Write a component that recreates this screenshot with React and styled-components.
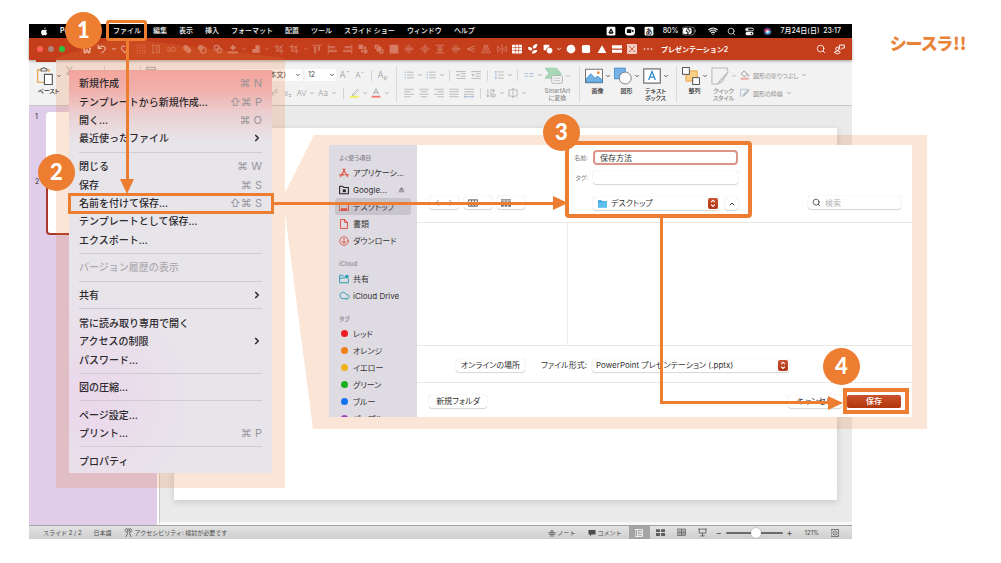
import React from "react";
import styled, { createGlobalStyle, css } from "styled-components";
import { ChevronDown, ChevronLeft, ChevronRight, ChevronUp, Cloud, Search, Wifi } from "lucide-react";

const ORANGE = "#ed7d31";
const HALO = "rgba(237, 125, 49, 0.2)";

const GlobalStyle = createGlobalStyle`
  * {
    box-sizing: border-box;
  }
  body {
    margin: 0;
    background: #ffffff;
    font-family: Inter, "Noto Sans CJK JP", sans-serif;
    color: #333333;
  }
  button,
  input,
  select {
    font: inherit;
    color: inherit;
    margin: 0;
    padding: 0;
    border: none;
    background: none;
    white-space: nowrap;
    font-feature-settings: inherit;
  }
  svg {
    display: block;
    flex: none;
  }
`;

const Page = styled.main`
  position: relative;
  display: flex;
  align-items: flex-start;
  padding: 24px 0;
`;

const Brand = styled.h1`
  flex: none;
  width: 149px;
  margin: 0;
  padding: 6px 0 0 38px;
  font-family: "Noto Sans CJK JP", sans-serif;
  font-feature-settings: "palt";
  font-size: 17px;
  line-height: 26px;
  font-weight: 900;
  color: #e8833a;
  white-space: nowrap;
`;

/* ---------- application window ---------- */

const AppWindow = styled.section`
  flex: 1;
  min-width: 0;
  margin-left: 29px;
`;

const MenuBar = styled.nav`
  display: flex;
  align-items: center;
  gap: 12px;
  height: 14px;
  padding: 0 11px;
  background: #000000;
  color: #f4f4f4;
  font-size: 7px;
  line-height: 14px;
  font-weight: 500;
  white-space: nowrap;
`;

const MenuBarItem = styled.button`
  font-weight: ${(props) => (props.$strong ? 700 : 500)};
  width: ${(props) => (props.$strong ? "41px" : "auto")};
  text-align: left;
  line-height: 14px;
`;

const AppleMark = styled.span`
  width: 8px;
`;

const MenuExtras = styled.div`
  display: flex;
  align-items: center;
  gap: 9px;
  margin-left: auto;
`;

const BatteryState = styled.span`
  display: flex;
  align-items: center;
  gap: 3px;
  margin-right: 3px;
`;

const TitleBar = styled.header`
  position: relative;
  z-index: 1;
  display: flex;
  align-items: center;
  height: 22px;
  padding: 0 7px 0 8px;
  background: #c43e1c;
  color: #ffffff;
  box-shadow: 0 1px 3px rgba(0, 0, 0, 0.35);
  &::after {
    content: "";
    position: absolute;
    left: 7px;
    top: 100%;
    width: 20px;
    height: 2px;
    background: #b5361a;
  }
`;

const Lights = styled.div`
  display: flex;
  gap: 5px;
  width: 43px;
`;

const Light = styled.span`
  width: 6px;
  height: 6px;
  border-radius: 50%;
  background: ${(props) => props.$color};
`;

const QuickAccess = styled.div`
  display: flex;
  align-items: center;
  justify-content: space-between;
  flex: 0 1 575px;
  min-width: 0;
`;

const QuickButton = styled.button`
  display: flex;
  justify-content: center;
  width: ${(props) => (props.$narrow ? 6 : 14)}px;
  opacity: ${(props) => (props.$dim ? 0.32 : 1)};
`;

const DocumentTitle = styled.h2`
  margin: 0 auto 0 6px;
  font-size: 7px;
  font-weight: 600;
  white-space: nowrap;
`;

const TitleActions = styled.div`
  display: flex;
  gap: 8px;
`;

const Ribbon = styled.div`
  display: flex;
  height: 46px;
  padding-top: 6px;
  background: #f3f2f2;
  border-bottom: 1px solid #c6c6c6;
  color: #9b9b9b;
  overflow: hidden;
`;

const Cluster = styled.div`
  flex: none;
  width: ${(props) => (props.$width ? props.$width + "px" : "auto")};
  padding: ${(props) => props.$pad || "0"};
  border-left: ${(props) => (props.$divided ? "1px solid #dcdcdc" : "none")};
  height: 36px;
  display: ${(props) => (props.$inline ? "flex" : "block")};
`;

const ToolRow = styled.div`
  display: flex;
  align-items: center;
  justify-content: ${(props) => (props.$end ? "flex-end" : "flex-start")};
  height: 18px;
`;

const Slot = styled.button`
  display: flex;
  justify-content: center;
  align-items: center;
  flex: none;
  width: ${(props) => props.$w}px;
  height: 16px;
`;

const Rule = styled.span`
  flex: none;
  display: flex;
  justify-content: center;
  width: ${(props) => props.$w}px;
  &::after {
    content: "";
    width: 1px;
    height: 11px;
    background: #d4d4d4;
  }
`;

const BigTool = styled.button`
  display: grid;
  grid-template-columns: 21px 8px;
  align-items: center;
  align-content: start;
  justify-content: center;
  justify-items: center;
  width: 29px;
  padding-top: 1px;
  color: ${(props) => (props.$dim ? "#a9a9a9" : "#333333")};
  font-size: 6px;
  line-height: 7px;
`;

const BigLabel = styled.span`
  grid-column: 1 / -1;
  justify-self: center;
  margin-top: 2px;
  color: ${(props) => (props.$dim ? "#8d8d8d" : "#2f2f2f")};
  font-weight: 500;
  font-feature-settings: "palt";
  white-space: pre;
  text-align: center;
`;

const ShapeTool = styled.button`
  display: flex;
  align-items: center;
  gap: 3px;
  height: 18px;
  color: #8f8f8f;
  font-size: 6px;
  font-feature-settings: "palt";
`;

const RibbonSelect = styled.span`
  position: relative;
  flex: none;
  width: ${(props) => props.$w}px;
  margin-right: ${(props) => props.$gap}px;
  select {
    appearance: none;
    display: block;
    width: 100%;
    height: 12px;
    padding: 0 3px;
    background: #ffffff;
    color: #444444;
    font-size: 7px;
    line-height: 12px;
    text-align: ${(props) => props.$align || "left"};
    padding-right: ${(props) => (props.$align ? 16 : 3)}px;
  }
  svg {
    position: absolute;
    top: 3px;
    right: 1px;
    color: #333333;
  }
`;

const Workspace = styled.div`
  display: flex;
`;

const Thumbnails = styled.aside`
  flex: none;
  width: 128px;
  padding: 6px 6px 0 6px;
  background: #dfcdea;
`;

const ThumbRow = styled.div`
  display: grid;
  grid-template-columns: 11px 1fr;
  align-items: start;
  margin-bottom: 7px;
  font-size: 7px;
  line-height: 9px;
`;

const Thumb = styled.button`
  height: 58px;
  background: #ffffff;
  border-radius: 4px;
  border: 2px solid ${(props) => (props.$active ? "#a8382a" : "#ffffff")};
`;

const Canvas = styled.div`
  flex: 1;
  min-width: 0;
  padding: 22px 15px 22px 14px;
  margin-left: 2px;
  border-left: 1px solid #cccccc;
  border-bottom: 3px solid #f8f8f8;
  background: #eaeaea;
`;

const Slide = styled.article`
  min-height: 372px;
  background: #ffffff;
  box-shadow: 0 2px 7px rgba(0, 0, 0, 0.14);
`;

const StatusBar = styled.footer`
  display: flex;
  align-items: center;
  gap: 12px;
  height: 14px;
  padding: 0 13px 0 14px;
  border-top: 1px solid #a3a3a3;
  background: linear-gradient(#e2e2e2, #cfcfcf);
  color: #4b4b4b;
  font-size: 6px;
  line-height: 13px;
  white-space: nowrap;
`;

const StatusButton = styled.button`
  display: flex;
  align-items: center;
  gap: 2px;
  line-height: 13px;
`;

const StatusTools = styled.div`
  display: flex;
  align-items: center;
  gap: 12px;
  height: 13px;
  margin-left: auto;
`;

const ViewSwitch = styled.div`
  display: flex;
  height: 13px;
  margin: 0 -9px 0 -5px;
`;

const ViewButton = styled.button`
  display: flex;
  justify-content: center;
  align-items: center;
  width: 21px;
  color: ${(props) => (props.$active ? "#ffffff" : "#5d5d5d")};
  background: ${(props) => (props.$active ? "#a4a4a4" : "none")};
`;

const Zoom = styled.div`
  display: flex;
  align-items: center;
  gap: 4px;
  font-size: 9px;
`;

const ZoomRange = styled.input`
  appearance: none;
  width: 57px;
  height: 10px;
  &::-webkit-slider-runnable-track {
    height: 2px;
    background: #6a6a6a;
    border-radius: 1px;
  }
  &::-webkit-slider-thumb {
    appearance: none;
    width: 10px;
    height: 10px;
    margin-top: -4px;
    border-radius: 50%;
    background: #ffffff;
    box-shadow: 0 0 2px rgba(0, 0, 0, 0.3);
  }
`;

/* ---------- annotations ---------- */

const Badge = styled.span`
  position: absolute;
  z-index: 5;
  left: ${(props) => props.$x}px;
  right: ${(props) => props.$right}px;
  top: ${(props) => props.$y}px;
  width: 37px;
  height: 37px;
  border-radius: 50%;
  background: ${ORANGE};
  color: #ffffff;
  font-family: Lato, sans-serif;
  font-size: 22px;
  line-height: 36px;
  font-weight: 900;
  text-align: center;
`;

const frame = css`
  content: "";
  position: absolute;
  z-index: 3;
  border: 4px solid ${ORANGE};
  pointer-events: none;
`;

const FileFrame = styled.span`
  ${frame}
  left: 106px;
  top: 20px;
  width: 41px;
  height: 21px;
  border-width: 3px;
  border-radius: 3px;
`;

const arrowHead = css`
  content: "";
  position: absolute;
  border: 7px solid transparent;
`;

const DownArrow = styled.span`
  position: absolute;
  z-index: 4;
  left: 70px;
  top: 0;
  width: 3px;
  height: 140px;
  background: ${ORANGE};
  &::after {
    ${arrowHead}
    left: -6px;
    bottom: -13px;
    border-bottom: none;
    border-top: 15px solid ${ORANGE};
  }
`;

const RightArrow = styled.span`
  position: absolute;
  z-index: 4;
  left: -12px;
  top: 67px;
  width: 282px;
  height: 3px;
  background: ${ORANGE};
  &::after {
    ${arrowHead}
    right: -13px;
    top: -6px;
    border-right: none;
    border-left: 15px solid ${ORANGE};
  }
`;

const ElbowArrow = styled.span`
  position: absolute;
  z-index: 4;
  left: 375px;
  right: 98px;
  top: 80px;
  height: 189px;
  border: solid ${ORANGE};
  border-width: 0 0 3px 3px;
  &::after {
    ${arrowHead}
    right: -14px;
    bottom: -9px;
    border-right: none;
    border-left: 15px solid ${ORANGE};
  }
`;

/* ---------- file menu ---------- */

const MenuCallout = styled.div`
  position: absolute;
  z-index: 2;
  left: 56px;
  top: 41px;
  width: 229px;
  padding: 29px 13px 15px;
  &::before {
    content: "";
    position: absolute;
    inset: 0;
    background: ${HALO};
    clip-path: polygon(50px 0, 91px 0, 100% 17px, 100% 100%, 0 100%, 0 17px);
  }
`;

const FileMenu = styled.div`
  position: relative;
  display: flex;
  flex-direction: column;
  height: 403px;
  padding: 4px 10px 3px;
  background: radial-gradient(circle at 20px 330px, rgba(236, 205, 236, 0.6), transparent 110px),
    linear-gradient(#f3a59d 0, #f0b0aa 20px, #ebcfd1 44px, #e8e5ea 72px);
  color: #2c2a2e;
  font-size: 10px;
  font-weight: 500;
`;

const MenuItem = styled.button`
  position: relative;
  display: flex;
  flex: 2 1 0;
  align-items: center;
  justify-content: space-between;
  line-height: 16px;
  text-align: left;
  color: ${(props) => (props.disabled ? "#aeabb1" : "inherit")};
  ${(props) =>
    props.$framed &&
    css`
      &::after {
        ${frame}
        inset: -1px -12px -2px -11px;
        border-width: 3px;
      }
    `}
`;

const MenuDivider = styled.hr`
  flex: 1 1 0;
  width: 100%;
  margin: 0;
  border: none;
  background: linear-gradient(#cfcbd1, #cfcbd1) center / 100% 1px no-repeat;
`;

const Shortcut = styled.kbd`
  font-family: Inter, "DejaVu Sans", sans-serif;
  font-size: 11px;
  font-weight: 400;
  color: #98949b;
`;

/* ---------- save dialog ---------- */

const DialogCallout = styled.div`
  position: absolute;
  z-index: 3;
  left: 285px;
  right: 74px;
  top: 135px;
  padding: 10px 15px 12px 44px;
  &::before {
    content: "";
    position: absolute;
    inset: 0;
    background: ${HALO};
    clip-path: polygon(29px 0, 100% 0, 100% 100%, 28px 100%, 0 78px, 0 58px);
  }
`;

const Dialog = styled.form`
  position: relative;
  display: grid;
  grid-template-columns: 88px 1fr;
  background: #ffffff;
  color: #333333;
  font-size: 8px;
  line-height: 12px;
  font-feature-settings: "palt";
  white-space: nowrap;
`;

const Places = styled.aside`
  height: 0;
  min-height: 100%;
  padding: 7px 6px 0;
  background: #dfdbe2;
  overflow: hidden;
`;

const PlaceGroup = styled.h3`
  margin: ${(props) => (props.$first ? 0 : 9)}px 0 0 4px;
  font-size: 6px;
  line-height: 12px;
  font-weight: 500;
  color: #8a878d;
`;

const Place = styled.button`
  display: flex;
  align-items: center;
  gap: 4px;
  width: 100%;
  height: 17px;
  padding: 0 6px 0 4px;
  border-radius: 3px;
  background: ${(props) => (props.$active ? "#c8c4cb" : "none")};
`;

const PlaceIcon = styled.span`
  display: flex;
  justify-content: center;
  width: 10px;
  color: ${(props) => props.$color};
`;

const TagDot = styled.i`
  width: 7px;
  height: 7px;
  border-radius: 50%;
  background: ${(props) => props.$color};
`;

const Eject = styled.span`
  margin-left: auto;
  color: #89868c;
`;

const DialogHeader = styled.div`
  display: grid;
  grid-template-columns: 148px 187px 1fr;
  height: 78px;
  border-bottom: 1px solid #e8e8e8;
`;

const control = css`
  height: 13px;
  border-radius: 3px;
  background: #ffffff;
  box-shadow: 0 0 1px rgba(0, 0, 0, 0.25), 0 1px 1px rgba(0, 0, 0, 0.14);
`;

const BrowseTools = styled.div`
  display: flex;
  gap: 5px;
  padding: 51px 0 0 12px;
`;

const BrowseButton = styled.button`
  ${control}
  display: flex;
  align-items: center;
  justify-content: center;
  gap: 4px;
  width: ${(props) => props.$w}px;
  color: #777777;
`;

const Fields = styled.div`
  position: relative;
  display: grid;
  grid-template-columns: 23px 126px 1fr;
  grid-template-rows: 15px 13px 20px;
  row-gap: 6px;
  column-gap: 5px;
  align-items: center;
  align-content: start;
  padding: 5px 14px 0 0;
  &::after {
    ${frame}
    inset: -4px 0 4px 0;
    border-radius: 4px;
  }
`;

const FieldLabel = styled.label`
  font-size: 6px;
  color: #808080;
  text-align: right;
`;

const NameInput = styled.input`
  grid-column: 2 / -1;
  width: 100%;
  height: 15px;
  padding: 0 5px;
  border: 2px solid #dc9488;
  border-radius: 4px;
  outline: none;
`;

const TagInput = styled.input`
  ${control}
  grid-column: 2 / -1;
  width: 100%;
`;

const Picker = styled.span`
  position: relative;
  grid-column: ${(props) => (props.$col ? props.$col : "auto")};
  align-self: ${(props) => (props.$col ? "end" : "auto")};
  width: ${(props) => (props.$w ? props.$w + "px" : "100%")};
  height: 13px;
  select {
    ${control}
    appearance: none;
    display: block;
    width: 100%;
    padding-left: ${(props) => (props.$col ? 18 : 4)}px;
    line-height: 13px;
  }
`;

const FolderMark = styled.span`
  position: absolute;
  left: 5px;
  top: 2px;
`;

const Stepper = styled.span`
  position: absolute;
  right: 1px;
  top: 1px;
  width: 10px;
  height: 11px;
  border-radius: 2px;
  background: linear-gradient(#c8502f, #b03512);
`;

const ExpandButton = styled.button`
  ${control}
  display: flex;
  align-items: center;
  justify-content: center;
  width: 13px;
  justify-self: end;
  align-self: end;
`;

const SearchBox = styled.label`
  ${control}
  display: flex;
  align-items: center;
  gap: 4px;
  margin: 51px 11px 0 auto;
  width: 93px;
  padding-left: 4px;
  input {
    width: 70px;
    outline: none;
  }
  input::placeholder {
    color: #b5b5b5;
  }
`;

const FileColumns = styled.div`
  display: grid;
  grid-template-columns: 151px 1fr;
  height: 123px;
  border-bottom: 1px solid #e8e8e8;
`;

const FileColumn = styled.div`
  border-right: 1px solid #ececec;
  &:last-child {
    border-right: none;
  }
`;

const FormatRow = styled.div`
  display: flex;
  align-items: center;
  gap: 5px;
  height: 37px;
  padding: 2px 0 0 39px;
  border-bottom: 1px solid #e8e8e8;
`;

const FormatLabel = styled.label`
  width: 57px;
  text-align: right;
`;

const PushButton = styled.button`
  ${control}
  width: ${(props) => props.$w}px;
  line-height: 13px;
`;

const DialogFooter = styled.div`
  display: flex;
  align-items: center;
  gap: 5px;
  height: 34px;
  padding: 3px 11px 0 12px;
`;

const SaveButton = styled.button`
  position: relative;
  width: 54px;
  height: 13px;
  border-radius: 2px;
  background: linear-gradient(#c9522d, #b23508);
  color: #ffffff;
  line-height: 13px;
  font-weight: 500;
  &::after {
    ${frame}
    inset: -7px -8px -6px -4px;
  }
`;

const Spacer = styled.span`
  flex: 1;
`;

/* ---------- glyphs, all on a 16 unit grid ---------- */

const line = { fill: "none", stroke: "currentColor", strokeWidth: 1.4, strokeLinecap: "round", strokeLinejoin: "round" };
const fill = { fill: "currentColor" };

const GLYPHS = {
  apple: (
    <g {...fill}>
      <path d="M11 8.500c0-1.600 1.300-2.400 1.400-2.500-.8-1.100-2-1.300-2.400-1.300-1-.1-2 .6-2.500.6S6.200 4.700 5.300 4.700C3 4.800 1.500 7 2 10c.3 2.300 1.900 5 3.300 5 .9 0 1.200-.6 2.300-.6s1.400.6 2.300.6c1.200 0 2.500-2.300 3-3.700-1.300-.6-1.900-1.600-1.900-2.800z" />
      <path d="M9.900 1c-1.200.2-2.400 1.400-2.200 3 1.400 0 2.400-1.500 2.200-3z" />
    </g>
  ),
  drive: (
    <g>
      <rect x="1" y="1" width="14" height="14" rx="2" fill="#fff" />
      <path d="M8 3.500 4 10.500l1.500 2h5l1.500-2z M8 7l-1.500 3h3z" fill="#000" fillRule="evenodd" />
    </g>
  ),
  camera: (
    <g>
      <rect x="0" y="1" width="16" height="14" rx="5" fill="#fff" />
      <rect x="3" y="5" width="7" height="6" rx="1" fill="#000" />
      <path d="m10.500 7.500 3-2v5l-3-2z" fill="#000" />
    </g>
  ),
  battery: (
    <g>
      <rect x="0" y="3.500" width="14" height="9" rx="3" fill="none" stroke="#8a8a8a" />
      <rect x="1" y="4.500" width="10" height="7" rx="2" fill="#fff" />
      <path d="m7.500 3.500-3 5h2L6 12.500l3.500-5.500h-2z" fill="#fff" stroke="#000" strokeWidth=".8" />
      <path d="M15.200 6.500v3" stroke="#8a8a8a" />
    </g>
  ),
  toggles: (
    <g>
      <rect x="1" y="2" width="14" height="5" rx="2.500" fill="none" stroke="#fff" strokeWidth="1.500" />
      <circle cx="4" cy="4.500" r="2" fill="#fff" />
      <rect x="1" y="9" width="14" height="5.500" rx="2.500" fill="#fff" />
      <circle cx="11.500" cy="11.700" r="1.500" fill="#000" />
    </g>
  ),
  siri: (
    <g>
      <circle cx="8" cy="8" r="7" fill="#3b3569" />
      <path d="M2 7c3-5 7-5 10-2-1 4-6 6-10 2z" fill="#e0457b" />
      <path d="M4 10c3-4 7-4 10-2-1 5-7 6-10 2z" fill="#4cc8e8" />
      <circle cx="8" cy="8" r="2" fill="#fff" />
    </g>
  ),
  home: <path {...line} d="M2 8 8 2.500 14 8M3.500 7v7H6.500V9.500h3V14h3V7" />,
  undo: <path {...line} d="M2 2v5h5M2.500 6.500C5 2.500 12 2 13 6.500c.7 3-2 5.500-5 7.500" />,
  redo: <path {...line} d="M13.500 8.500 8 14 3 8.500C1 5.500 4 2 7 3.500" />,
  grid: (
    <g {...fill}>
      {[2, 6, 10, 14].map((y) => [2, 6, 10, 14].map((x) => <circle key={x + "-" + y} cx={x} cy={y} r="1" />))}
    </g>
  ),
  rulers: <path {...line} strokeDasharray="2 1.500" d="M3 2v12M2 2h5M2 14h5M9.500 2h4v12h-4z" />,
  union: <path {...fill} d="M2 5a4 4 0 0 1 6-3l6 6a4 4 0 0 1-5 6L3 9a5 5 0 0 1-1-4z" />,
  combine: (
    <g>
      <circle cx="6" cy="6" r="4.500" {...fill} />
      <circle cx="10" cy="10" r="4.500" fill="none" stroke="currentColor" strokeWidth="2" />
    </g>
  ),
  fragment: (
    <g {...line} strokeWidth="2">
      <circle cx="6" cy="6" r="4" />
      <circle cx="10" cy="10" r="4" />
    </g>
  ),
  bucket: (
    <g {...fill}>
      <path d="m8 1 5 5-5 4.500L3 6z" />
      <rect x="0" y="12" width="16" height="3" />
    </g>
  ),
  corner: <path {...fill} d="M2 14V8h5V2h7v12z" />,
  crop: <path {...line} d="M4.500 1v10.500H15M1 4.500h10.500V15M5 11l9-9" />,
  alignTop: <path {...line} d="M1 2h14M4 5v9h2V5zM10 5v5h2V5z" />,
  alignLeft: <path {...line} d="M2 1v14M4 4h8v2H4zM4 10h11v2H4z" />,
  alignRight: <path {...line} d="M14 1v14M4 4h8v2H4zM1 10h11v2H1z" />,
  front: (
    <g {...fill}>
      <rect x="1" y="1" width="7" height="7" />
      <rect x="9" y="9" width="6" height="6" />
      <path d="M5 9h3v4H5zM9 4h4v4H9z" />
    </g>
  ),
  back: <path {...fill} d="M1 1h7v2H3v5H1zM4 4h8v8H4zM15 15H8v-2h5V8h2z" />,
  group: <path {...fill} fillRule="evenodd" d="M1 1h14v14H1zM3 3v1h1V3zM12 3v1h1V3zM3 12v1h1v-1zM12 12v1h1v-1z" />,
  distH: <path {...line} d="M1 8h14M4.500 3v10M11.500 5v6M8 1v14" />,
  centerV: <path {...line} d="M1 8h14M8 1v4M8 11v4M4 5h8M4 11h8" />,
  distV: <path {...line} d="M2 2h12M5 5h6M8 5v6M5 11h6M2 14h12M4 8h8" />,
  rotate: <path {...line} d="m14 3-12 5 12 5M2 8h12" />,
  flip: <path {...line} d="M6.500 2v12H2zM9.500 2v12H14z" />,
  mirror: <path {...line} d="M8 1v14M1 4l5 4-5 4zM15 4l-5 4 5 4z" />,
  table: (
    <g>
      <rect x="0" y="1" width="16" height="14" rx="1" {...fill} />
      <path d="M.5 5.700h15M.5 10.300h15M5.400 1.500v13M10.600 1.500v13" stroke="#c43e1c" />
    </g>
  ),
  leaf: <path {...fill} d="M15 0C10 0 7 3 8 7c4 1 7-2 7-7zM0 5c4-1 7 1 7 5-4 1-7-1-7-5zM6 15c1-4 4-6 9-5-1 4-5 6-9 5z" />,
  shapes: (
    <g>
      <path {...fill} d="M1 1h9v4a5 5 0 0 0-5 5H1z" />
      <circle cx="10.500" cy="10.500" r="4.500" {...fill} />
    </g>
  ),
  disc: <circle cx="8" cy="8" r="7" {...fill} />,
  square: <rect x="1.500" y="1.500" width="13" height="13" rx="2.500" {...fill} />,
  triangle: <path {...fill} d="m8 2 7 12.500H1z" />,
  bars: <path {...fill} d="M0 2h16v5H0zM0 9h16v5H0z" />,
  boxX: (
    <g>
      <rect x="1" y="1" width="14" height="14" fill="#f4cfc4" stroke="#fff" />
      <path d="m3 3 10 10M13 3 3 13" stroke="#c43e1c" strokeWidth="1.200" />
    </g>
  ),
  more: (
    <g {...fill}>
      <circle cx="2.500" cy="8" r="1.300" />
      <circle cx="8" cy="8" r="1.300" />
      <circle cx="13.500" cy="8" r="1.300" />
    </g>
  ),
  share: (
    <g {...line}>
      <circle cx="5" cy="7" r="2.500" />
      <path d="M1 12c2-2.500 6-2.500 8 0-1 3-7 3-8 0zM8 5V1.500h7V6h-3l-2 2" />
    </g>
  ),
  paste: (
    <g fill="none" strokeWidth="1">
      <path stroke="#e39a3c" d="M5 2.500H1.500v11H7" />
      <path stroke="#e39a3c" d="M9 2.500h2.500v2" />
      <path stroke="#666" fill="#fff" d="M4.500 3.500v-2h1.500c.3-1.300 1.700-1.300 2 0h1.500v2z" />
      <path stroke="#555" fill="#fff" d="M7.500 6.500h7v9h-7z" />
    </g>
  ),
  scissors: <path {...line} d="m3 1 8 11M13 1 5 12M3 14a2 2 0 1 0 2-2M13 14a2 2 0 1 1-2-2" />,
  layout: <path {...line} d="M1 2h14v12H1zM1 6h14M6 6v8" />,
  bullets: (
    <g>
      <path d="M1 3.500h2M1 8h2M1 12.500h2" stroke="#88a9cf" strokeWidth="1.600" />
      <path {...line} strokeWidth="1" d="M5.500 3.500H15M5.500 8H15M5.500 12.500H15" />
    </g>
  ),
  indent: <path {...line} strokeWidth="1" d="M1 2.500h14M8 6h7M8 10h7M1 13.500h14M5.500 8H1.500M3 6.500 1.500 8 3 9.500" />,
  spacing: (
    <g>
      <path d="M3 2v12M1.500 3.500 3 2l1.500 1.500M1.500 12.500 3 14l1.500-1.500" fill="none" stroke="#88a9cf" />
      <path {...line} strokeWidth="1" d="M7 3h8M7 8h8M7 13h8" />
    </g>
  ),
  columns: <path d="M1 5.500h6M9 5.500h6M1 10h6M9 10h6" stroke="#9db4d0" strokeWidth="1.300" />,
  left: <path {...line} strokeWidth="1" d="M1 2h14M1 6h9M1 10h14M1 14h9" />,
  center: <path {...line} strokeWidth="1" d="M1 2h14M3.500 6h9M1 10h14M3.500 14h9" />,
  right: <path {...line} strokeWidth="1" d="M1 2h14M6 6h9M1 10h14M6 14h9" />,
  justify: <path {...line} strokeWidth="1" d="M1 2h14M1 6h14M1 10h14M1 14h14" />,
  spread: (
    <g>
      <path {...line} strokeWidth="1" d="M1 2h14M1 6h14M1 10h14" />
      <path d="M1 14h14M1 12v3M15 12v3" stroke="#6f98c9" fill="none" />
    </g>
  ),
  textDir: <path {...line} strokeWidth="1" d="M3 2v12M1.500 12 3 14l1.500-2M8 2v12M12 7V2l-1.500 2M12 2l1.500 2M10.500 14h4v-4h-4z" />,
  textBox: <path {...line} strokeWidth="1" d="M5 3H1.500v10H5M11 3h3.500v10H11M8 1v14M6.500 3 8 1l1.500 2M6.500 13 8 15l1.500-2" />,
  marker: (
    <g>
      <path {...line} strokeWidth="1" d="m5 9 7-7 2 2-7 7-3 1z" />
      <path d="M0 14h14" stroke="#f1ee58" strokeWidth="3" />
    </g>
  ),
  fontColor: (
    <g>
      <path {...line} strokeWidth="1.200" d="m4 10 4-9 4 9M5.500 7h5" />
      <path d="M1 14h14" stroke="#ef7d72" strokeWidth="3" />
    </g>
  ),
  smartArt: (
    <g>
      <path d="M0 1h10l4.500 5L10 10H0l3.500-4.500z" fill="#a9d8b9" stroke="#86bf9b" strokeWidth=".5" />
      <rect x="6" y="7.500" width="9.500" height="7" rx="1" fill="#f3f3f3" stroke="#aaa" strokeWidth=".7" />
      <path d="M8 10h5.500M8 12h5.500" stroke="#bbb" strokeWidth=".7" />
    </g>
  ),
  picture: (
    <g>
      <rect x=".5" y="2" width="15" height="12" fill="#fff" stroke="#666" strokeWidth=".8" />
      <path d="M1 10.500 5 6l4 4 2-2 4.500 3.500v2H1z" fill="#72b3e6" stroke="#2a7dbf" strokeWidth=".6" />
      <circle cx="11.800" cy="5" r="1.200" fill="#ef8b3a" />
    </g>
  ),
  shapePair: (
    <g>
      <rect x=".5" y="1" width="9.500" height="9.500" fill="#74b3e7" stroke="#3a86c8" strokeWidth=".7" />
      <circle cx="10" cy="9.800" r="5.300" fill="#fbfbfb" stroke="#777" strokeWidth=".8" />
    </g>
  ),
  textFrame: (
    <g>
      <rect x=".7" y="1.700" width="14.600" height="12.600" fill="#fff" stroke="#555" strokeWidth=".9" />
      <path d="m5 11.500 3-7.500 3 7.500M6 9h4" fill="none" stroke="#2b8bd0" strokeWidth="1.100" />
    </g>
  ),
  arrange: (
    <g strokeWidth=".8">
      <rect x="3.500" y="3.500" width="10" height="9" fill="#f9cf83" stroke="#e9a33c" />
      <rect x=".5" y=".5" width="6" height="6" fill="#fff" stroke="#444" />
      <rect x="9.500" y="9.500" width="6" height="6" fill="#fff" stroke="#444" />
    </g>
  ),
  quickStyle: (
    <g fill="none" stroke="#b9b9b9" strokeWidth=".9">
      <path d="M14.500 4V.8H.8v14.400H6" />
      <path d="M15.500 4 8 12l-2 3 3.500-1.500z" fill="#d7e2ec" />
    </g>
  ),
  shapeFill: (
    <g>
      <path {...line} d="m7 2 5 4.500L7 11 2.500 6.500zM13 7c2 2 1 3 0 3" />
      <path d="M1 14h13" stroke="#eda9a0" strokeWidth="3" />
    </g>
  ),
  shapeLine: (
    <g fill="none" strokeWidth="1.200">
      <path stroke="#9db9d4" d="M11 2H1v11h5l8-9" />
      <path stroke="#8f9aa5" d="m6 10 7-8 1.500 1.500L8 11l-2.500.5z" />
    </g>
  ),
  person: (
    <g {...line}>
      <circle cx="8" cy="3.500" r="2" />
      <path d="M2 5.500 6 7v3l-2 5M14 5.500 10 7v3l2 5M2 3a8 8 0 0 1 3-2M11 1a8 8 0 0 1 3 2" />
    </g>
  ),
  notes: <path {...line} d="M1 8h14M3 11h10M5 14h6M5 6l3-4 3 4z" />,
  comment: <path {...fill} d="M1 2h14v9H7l-3 4v-4H1z" />,
  normalView: <path {...line} strokeWidth="1.500" d="M1 1h14v14H1zM5 1v14M8 5h5M8 8h5M5 11.500h10" />,
  sorter: <path {...fill} d="M0 2h7v5H0zM9 2h7v5H9zM0 9h7v5H0zM9 9h7v5H9z" />,
  reading: <path {...line} strokeWidth="1.500" d="M1 2h14v11H1zM8 3v10M3 5.500h3M3 8h3M3 10.500h3M10 5.500h3M10 8h3M10 10.500h3" />,
  show: <path {...line} strokeWidth="1.500" d="M1 2h14M2 2v7h12V2M8 9v5M5 14h6" />,
  fit: <path {...line} strokeWidth="1.300" d="M1 1h14v14H1zM8 3v3M8 10v3M3 8h3M10 8h3M4 4l1.500 1.500M12 4l-1.500 1.500M4 12l1.500-1.500M12 12l-1.500-1.500" />,
  apps: <path {...line} strokeWidth="1.700" d="M9.500 1.500 4 11M6.500 1.500 12 11M1 11h7M11 11h4M2.500 14l.5-1M13.500 14l-.5-1" />,
  driveFolder: (
    <g>
      <path {...line} strokeWidth="1.700" d="M1 14V2h5l1.500 2H15v10z" />
      <rect x="6" y="7" width="5" height="4.500" {...fill} />
    </g>
  ),
  desktop: (
    <g>
      <path {...line} strokeWidth="1.500" d="M1 2.500h14v11H1z" />
      <path {...fill} d="M3 10h10v2.500H3z" />
    </g>
  ),
  document: <path {...line} strokeWidth="1.500" d="M3 1h6l4.500 4.500V15H3zM9 1v4.500h4.500" />,
  download: (
    <g {...line} strokeWidth="1.400">
      <circle cx="8" cy="8" r="6.800" />
      <path d="M8 4v7.500M5 8.700 8 11.700l3-3" />
    </g>
  ),
  sharedFolder: (
    <g>
      <path {...line} strokeWidth="1.500" d="M8 3.500H7L5.500 2H1v12h14V8M1 6.500h8" />
      <circle cx="12.500" cy="4" r="3" {...fill} />
    </g>
  ),
  eject: <path {...fill} d="m8 2 6.500 8h-13zM1.500 12h13v2h-13z" />,
  folder: (
    <g>
      <path d="M0 2h6l1.500 2H16v11H0z" fill="#2f9fd8" />
      <path d="M0 5.500h16V15H0z" fill="#5cc0ee" />
    </g>
  ),
  stepper: <path d="M5 6.500 8 3.500l3 3M5 10.500l3 3 3-3" fill="none" stroke="#fff" strokeWidth="1.800" />,
  columnView: <path {...line} strokeWidth="1.700" d="M1 3h14v10H1zM5.700 3v10M10.300 3v10" />,
  groupView: <path {...fill} d="M0 2h16v2H0zM0 5h4.500v3.500H0zM5.700 5h4.500v3.500H5.700zM11.500 5H16v3.500h-4.500zM0 10h4.500v4H0zM5.700 10h4.500v4H5.700zM11.500 10H16v4h-4.500z" />,
};

const Glyph = ({ name, size = 10 }) => (
  <svg width={size} height={size} viewBox="0 0 16 16" aria-hidden="true">
    {GLYPHS[name]}
  </svg>
);

const Caret = () => <ChevronDown size={6} strokeWidth={3} />;

const MiniText = styled.span`
  font-size: 9px;
  line-height: 12px;
  font-weight: 300;
`;

const SmallText = styled(MiniText)`
  font-size: 8px;
`;

/* ---------- data ---------- */

const MENUS = ["ファイル", "編集", "表示", "挿入", "フォーマット", "配置", "ツール", "スライド ショー", "ウィンドウ", "ヘルプ"];

const QUICK_TOOLS = [
  "home", "undo", "v", "redo", "-grid", "-rulers", "-ab", "-union", "-combine", "-fragment", "-bucket", "-v",
  "-corner", "-v", "-crop", "-crop", "-v", "-alignTop", "-alignLeft", "-alignRight", "-front", "-back", "-group",
  "-distH", "-centerV", "-distV", "-distH", "-rotate", "-flip", "-mirror", "table", "leaf", "shapes", "v", "disc",
  "square", "triangle", "bars", "boxX", "more",
];

const FONT_ROW = [
  ["x²", 14], ["x₂", 14], ["AV", 13], ["v", 8], ["Aa", 14], ["v", 8], ["|", 10], ["marker", 13], ["v", 7],
  ["fontColor", 15], ["v", 7],
];

const PARAGRAPH_ROWS = [
  [
    ["bullets", 15], ["v", 7], ["bullets", 15], ["v", 7], ["|", 8], ["indent", 15], ["indent", 15], ["|", 9],
    ["spacing", 14], ["v", 7], ["|", 9], ["columns", 14], ["v", 7],
  ],
  [
    ["left", 15], ["center", 15], ["right", 15], ["justify", 15], ["spread", 15], ["|", 8], ["textDir", 14],
    ["v", 7], ["textBox", 15], ["v", 7],
  ],
];

const FILE_MENU = [
  ["新規作成", "⌘ N"],
  ["テンプレートから新規作成...", "⇧⌘ P"],
  ["開く...", "⌘ O"],
  ["最近使ったファイル", ">"],
  null,
  ["閉じる", "⌘ W"],
  ["保存", "⌘ S"],
  ["名前を付けて保存...", "⇧⌘ S"],
  ["テンプレートとして保存..."],
  ["エクスポート..."],
  null,
  ["バージョン履歴の表示"],
  null,
  ["共有", ">"],
  null,
  ["常に読み取り専用で開く"],
  ["アクセスの制限", ">"],
  ["パスワード..."],
  null,
  ["図の圧縮..."],
  null,
  ["ページ設定..."],
  ["プリント...", "⌘ P"],
  null,
  ["プロパティ"],
];

const FAVORITES = [
  ["アプリケーシ…", "apps", "#dd4a36"],
  ["Google...", "driveFolder", "#222222"],
  ["デスクトップ", "desktop", "#dd4a36"],
  ["書類", "document", "#dd4a36"],
  ["ダウンロード", "download", "#dd4a36"],
];

const TAGS = [
  ["レッド", "#ee1c25"],
  ["オレンジ", "#f0801a"],
  ["イエロー", "#efb41c"],
  ["グリーン", "#1bb01f"],
  ["ブルー", "#1272ee"],
  ["パープル", "#9a3cc0"],
];

/* ---------- parts ---------- */

const Tool = ({ item: [name, width] }) => {
  if (name === "|") return <Rule $w={width} />;
  return (
    <Slot type="button" $w={width} aria-label={name === "v" ? "more" : name}>
      {name === "v" ? <Caret /> : GLYPHS[name] ? <Glyph name={name} /> : <SmallText>{name}</SmallText>}
    </Slot>
  );
};

const Big = ({ icon, label, dim }) => (
  <BigTool type="button" $dim={dim}>
    <Glyph name={icon} size={18} />
    <Caret />
    <BigLabel $dim={dim}>{label}</BigLabel>
  </BigTool>
);

const RibbonBar = () => (
  <Ribbon>
    <Cluster $width={36} $pad="0 0 0 5px">
      <Big icon="paste" label="ペースト" />
    </Cluster>
    <Cluster $width={166} $inline>
      <Glyph name="scissors" size={9} />
      <Rule $w={60} />
      <Rule $w={12} />
      <Glyph name="layout" size={10} />
    </Cluster>
    <Cluster $width={165} $pad="0 6px 0 0">
      <ToolRow $end>
        <RibbonSelect $w={62} $gap={3} $align="right">
          <select aria-label="フォント">
            <option>(本文)</option>
          </select>
          <ChevronDown size={6} strokeWidth={3} />
        </RibbonSelect>
        <RibbonSelect $w={31} $gap={1}>
          <select aria-label="サイズ">
            <option>12</option>
          </select>
          <ChevronDown size={6} strokeWidth={3} />
        </RibbonSelect>
        <Slot type="button" $w={15}><MiniText>Aˆ</MiniText></Slot>
        <Slot type="button" $w={15}><SmallText>Aˇ</SmallText></Slot>
        <Rule $w={8} />
        <Slot type="button" $w={15}><MiniText>Aₚ</MiniText></Slot>
      </ToolRow>
      <ToolRow $end>
        {FONT_ROW.map((item, i) => <Tool key={i} item={item} />)}
      </ToolRow>
    </Cluster>
    <Cluster $divided $pad="0 0 0 4px">
      {PARAGRAPH_ROWS.map((row, r) => (
        <ToolRow key={r}>
          {row.map((item, i) => <Tool key={i} item={item} />)}
        </ToolRow>
      ))}
    </Cluster>
    <Cluster $width={36} $inline>
      <Big icon="smartArt" label={"SmartArt\nに変換"} dim />
    </Cluster>
    <Cluster $divided $width={97} $pad="0 0 0 3px" $inline>
      <Big icon="picture" label="画像" />
      <Big icon="shapePair" label="図形" />
      <Big icon="textFrame" label={"テキスト\nボックス"} />
    </Cluster>
    <Cluster $divided $pad="0 0 0 3px" $inline>
      <Big icon="arrange" label="整列" />
      <Big icon="quickStyle" label={"クイック\nスタイル"} dim />
    </Cluster>
    <Cluster $pad="0 0 0 2px">
      <ShapeTool type="button"><Glyph name="shapeFill" />図形の塗りつぶし<Caret /></ShapeTool>
      <ShapeTool type="button"><Glyph name="shapeLine" />図形の枠線<Caret /></ShapeTool>
    </Cluster>
  </Ribbon>
);

const PowerPointWindow = () => (
  <AppWindow>
    <MenuBar>
      <AppleMark><Glyph name="apple" size={9} /></AppleMark>
      <MenuBarItem $strong>PowerPoint</MenuBarItem>
      {MENUS.map((menu) => <MenuBarItem key={menu}>{menu}</MenuBarItem>)}
      <MenuExtras>
        <Glyph name="drive" />
        <Glyph name="camera" />
        <svg width="10" height="10" viewBox="0 0 16 16">
          <rect x="1" y="1" width="14" height="14" rx="2" fill="#fff" />
          <text x="8" y="12" fontSize="11" textAnchor="middle" fill="#000">あ</text>
        </svg>
        <BatteryState>80%<Glyph name="battery" size={14} /></BatteryState>
        <Wifi size={10} strokeWidth={3} />
        <Search size={9} strokeWidth={2} />
        <Glyph name="toggles" size={9} />
        <Glyph name="siri" size={9} />
        <span>7月24日(日)&nbsp; 23:17</span>
      </MenuExtras>
    </MenuBar>
    <TitleBar>
      <Lights>
        <Light $color="#ff6058" />
        <Light $color="#b08479" />
        <Light $color="#2ac33f" />
      </Lights>
      <QuickAccess>
        {QUICK_TOOLS.map((tool, i) => {
          const dim = tool[0] === "-";
          const name = dim ? tool.slice(1) : tool;
          return (
            <QuickButton key={i} type="button" aria-label={name} $dim={dim} $narrow={name === "v"}>
              {name === "v" ? <Caret /> : name === "ab" ? <SmallText>ab</SmallText> : <Glyph name={name} />}
            </QuickButton>
          );
        })}
      </QuickAccess>
      <DocumentTitle>プレゼンテーション2</DocumentTitle>
      <TitleActions>
        <Search size={10} strokeWidth={2} />
        <Glyph name="share" size={11} />
      </TitleActions>
    </TitleBar>
    <RibbonBar />
    <Workspace>
      <Thumbnails>
        <ThumbRow>1<Thumb aria-label="スライド 1" /></ThumbRow>
        <ThumbRow>2<Thumb aria-label="スライド 2" $active /></ThumbRow>
      </Thumbnails>
      <Canvas>
        <Slide />
      </Canvas>
    </Workspace>
    <StatusBar>
      <span>スライド 2 / 2</span>
      <span>日本語</span>
      <StatusButton><Glyph name="person" size={9} />アクセシビリティ: 検討が必要です</StatusButton>
      <StatusTools>
        <StatusButton><Glyph name="notes" size={8} />ノート</StatusButton>
        <StatusButton><Glyph name="comment" size={8} />コメント</StatusButton>
        <ViewSwitch>
          <ViewButton $active aria-label="標準"><Glyph name="normalView" size={8} /></ViewButton>
          <ViewButton aria-label="一覧"><Glyph name="sorter" size={9} /></ViewButton>
          <ViewButton aria-label="閲覧"><Glyph name="reading" size={9} /></ViewButton>
          <ViewButton aria-label="スライドショー"><Glyph name="show" size={9} /></ViewButton>
        </ViewSwitch>
        <Zoom>
          <button aria-label="縮小">−</button>
          <ZoomRange type="range" aria-label="ズーム" min="0" max="100" defaultValue="53" />
          <button aria-label="拡大">+</button>
        </Zoom>
        <span>121%</span>
        <Glyph name="fit" size={8} />
      </StatusTools>
    </StatusBar>
  </AppWindow>
);

const FileMenuCallout = () => (
  <MenuCallout>
    <FileMenu role="menu">
      {FILE_MENU.map((entry, i) => {
        if (!entry) return <MenuDivider key={i} />;
        const [label, hint] = entry;
        return (
          <MenuItem
            key={i}
            role="menuitem"
            disabled={label.startsWith("バージョン")}
            $framed={label.startsWith("名前")}
          >
            {label}
            {hint === ">" && <ChevronRight size={10} strokeWidth={4} />}
            {hint && hint !== ">" && <Shortcut>{hint}</Shortcut>}
          </MenuItem>
        );
      })}
    </FileMenu>
    <DownArrow />
  </MenuCallout>
);

const SaveDialog = () => (
  <DialogCallout>
    <Dialog onSubmit={(e) => e.preventDefault()}>
      <Places>
        <PlaceGroup $first>よく使う項目</PlaceGroup>
        {FAVORITES.map(([label, icon, color]) => (
          <Place key={label} type="button" $active={icon === "desktop"}>
            <PlaceIcon $color={color}><Glyph name={icon} /></PlaceIcon>
            {label}
            {icon === "driveFolder" && <Eject><Glyph name="eject" size={7} /></Eject>}
          </Place>
        ))}
        <PlaceGroup>iCloud</PlaceGroup>
        <Place type="button">
          <PlaceIcon $color="#2a9db5"><Glyph name="sharedFolder" /></PlaceIcon>共有
        </Place>
        <Place type="button">
          <PlaceIcon $color="#2a9db5"><Cloud size={11} /></PlaceIcon>iCloud Drive
        </Place>
        <PlaceGroup>タグ</PlaceGroup>
        {TAGS.map(([label, color]) => (
          <Place key={label} type="button">
            <PlaceIcon><TagDot $color={color} /></PlaceIcon>{label}
          </Place>
        ))}
      </Places>
      <div>
        <DialogHeader>
          <BrowseTools>
            <BrowseButton type="button" $w={30} aria-label="戻る/進む">
              <ChevronLeft size={10} /><ChevronRight size={10} />
            </BrowseButton>
            <BrowseButton type="button" $w={28} aria-label="カラム表示"><Glyph name="columnView" /><Caret /></BrowseButton>
            <BrowseButton type="button" $w={28} aria-label="グループ"><Glyph name="groupView" /><Caret /></BrowseButton>
          </BrowseTools>
          <Fields>
            <FieldLabel htmlFor="name">名前:</FieldLabel>
            <NameInput id="name" defaultValue="保存方法" />
            <FieldLabel htmlFor="tags">タグ:</FieldLabel>
            <TagInput id="tags" />
            <Picker $col={2}>
              <select aria-label="場所">
                <option>デスクトップ</option>
              </select>
              <FolderMark><Glyph name="folder" size={9} /></FolderMark>
              <Stepper><Glyph name="stepper" /></Stepper>
            </Picker>
            <ExpandButton type="button" aria-label="詳細"><ChevronUp size={8} strokeWidth={3} /></ExpandButton>
          </Fields>
          <SearchBox>
            <Search size={9} />
            <input type="text" placeholder="検索" aria-label="検索" />
          </SearchBox>
        </DialogHeader>
        <FileColumns>
          <FileColumn />
          <FileColumn />
        </FileColumns>
        <FormatRow>
          <PushButton type="button" $w={69}>オンラインの場所</PushButton>
          <FormatLabel htmlFor="format">ファイル形式:</FormatLabel>
          <Picker $w={197}>
            <select id="format">
              <option>PowerPoint プレゼンテーション (.pptx)</option>
            </select>
            <Stepper><Glyph name="stepper" /></Stepper>
          </Picker>
        </FormatRow>
        <DialogFooter>
          <PushButton type="button" $w={58}>新規フォルダ</PushButton>
          <Spacer />
          <PushButton type="button" $w={54}>キャンセル</PushButton>
          <SaveButton type="submit">保存</SaveButton>
        </DialogFooter>
      </div>
    </Dialog>
    <RightArrow />
    <ElbowArrow />
    <Badge $x={258} $y={-21}>3</Badge>
    <Badge $right={67} $y={213}>4</Badge>
  </DialogCallout>
);

const App = () => (
  <>
    <GlobalStyle />
    <Page>
      <PowerPointWindow />
      <Brand>シースラ!!</Brand>
      <FileMenuCallout />
      <SaveDialog />
      <FileFrame />
      <Badge $x={65} $y={12}>1</Badge>
      <Badge $x={38} $y={154}>2</Badge>
    </Page>
  </>
);

export default App;
